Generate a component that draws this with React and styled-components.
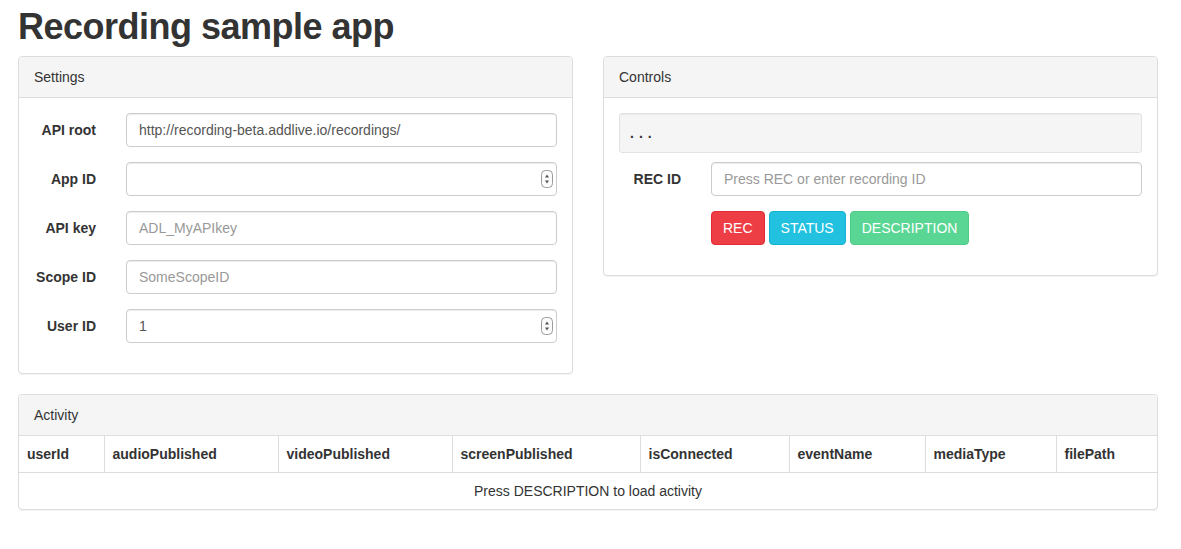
import React from 'react';
import styled, { createGlobalStyle } from 'styled-components';

const GlobalStyle = createGlobalStyle`
  html, body {
    margin: 0;
    padding: 0;
    background: #fff;
  }
  body {
    font-family: "Liberation Sans", Arial, Helvetica, sans-serif;
    font-size: 14px;
    line-height: 20px;
    color: #333;
  }
  * { box-sizing: border-box; }
`;

const Page = styled.div`
  width: 1140px;
  margin-left: 18px;
`;

const Title = styled.h1`
  margin: 7px 0 9px;
  font-size: 36px;
  font-weight: bold;
  letter-spacing: -0.5px;
  line-height: 39.6px;
  color: #333;
`;

const Row = styled.div`
  display: grid;
  grid-template-columns: 555px 555px;
  column-gap: 30px;
  align-items: start;
`;

const Panel = styled.div`
  background: #fff;
  border: 1px solid #ddd;
  border-radius: 4px;
  box-shadow: 0 1px 1px rgba(0, 0, 0, 0.05);
  margin-bottom: 20px;
  overflow: hidden;
`;

const PanelHeading = styled.div`
  padding: 10px 15px;
  background: #f5f5f5;
  border-bottom: 1px solid #ddd;
  color: #333;
`;

const PanelBody = styled.div`
  padding: 15px;
`;

const FormGroup = styled.div`
  display: grid;
  grid-template-columns: 62px 1fr;
  column-gap: 30px;
  margin-bottom: 15px;
`;

const Label = styled.label`
  padding-top: 7px;
  text-align: right;
  font-weight: bold;
  white-space: nowrap;
`;

const InputWrap = styled.div`
  position: relative;
  grid-column: ${(p) => (p.offset ? '2' : 'auto')};
`;

const Input = styled.input`
  display: block;
  width: 100%;
  height: 34px;
  padding: 6px 12px;
  font-family: inherit;
  font-size: 14px;
  line-height: 20px;
  color: #555;
  background: #fff;
  border: 1px solid #ccc;
  border-radius: 4px;
  box-shadow: inset 0 1px 1px rgba(0, 0, 0, 0.075);
  outline: none;
  &::placeholder {
    color: #999;
    opacity: 1;
  }
  &::-webkit-inner-spin-button,
  &::-webkit-outer-spin-button {
    -webkit-appearance: none;
    margin: 0;
  }
`;

const Spinner = styled.svg`
  position: absolute;
  right: 4px;
  top: 8px;
  pointer-events: none;
`;

const Well = styled.div`
  min-height: 20px;
  padding: 9px 10px;
  margin-bottom: 9px;
  background: #f5f5f5;
  border: 1px solid #e3e3e3;
  border-radius: 3px;
  box-shadow: inset 0 1px 1px rgba(0, 0, 0, 0.05);
  font-weight: bold;
  letter-spacing: 5px;
`;

const Buttons = styled.div`
  display: flex;
  gap: 4px;
`;

const Button = styled.button`
  height: 34px;
  padding: 6px 11px;
  font-family: inherit;
  font-size: 14px;
  line-height: 20px;
  color: #fff;
  background: ${(p) => p.bg};
  border: 1px solid ${(p) => p.border};
  border-radius: 4px;
  cursor: pointer;
`;

const Table = styled.table`
  width: 100%;
  border-collapse: collapse;
  table-layout: fixed;
`;

const Th = styled.th`
  padding: 8px;
  text-align: left;
  font-weight: bold;
  line-height: 20px;
  border-left: 1px solid #ddd;
  border-bottom: 1px solid #ddd;
  &:first-child { border-left: none; }
`;

const Td = styled.td`
  padding: 8px;
  text-align: center;
  line-height: 20px;
`;

const NumberSpinner = () => (
  <Spinner width="12" height="18" viewBox="0 0 12 18">
    <rect x="0.5" y="0.5" width="11" height="17" rx="4" fill="#fbfbfb" stroke="#9a9a9a" />
    <path d="M6 4.5 L8 7.5 L4 7.5 Z" fill="#555" />
    <path d="M6 13.5 L8 10.5 L4 10.5 Z" fill="#555" />
  </Spinner>
);

const Field = ({ label, value, placeholder, number }) => (
  <FormGroup>
    <Label>{label}</Label>
    <InputWrap>
      <Input
        type={number ? 'number' : 'text'}
        defaultValue={value}
        placeholder={placeholder}
      />
      {number && <NumberSpinner />}
    </InputWrap>
  </FormGroup>
);

const columns = [
  ['userId', 85],
  ['audioPublished', 174],
  ['videoPublished', 174],
  ['screenPublished', 188],
  ['isConnected', 149],
  ['eventName', 136],
  ['mediaType', 131],
  ['filePath', 101],
];

export default function App() {
  return (
    <Page>
      <GlobalStyle />
      <Title>Recording sample app</Title>
      <Row>
        <Panel>
          <PanelHeading>Settings</PanelHeading>
          <PanelBody>
            <Field label="API root" value="http://recording-beta.addlive.io/recordings/" />
            <Field label="App ID" number />
            <Field label="API key" placeholder="ADL_MyAPIkey" />
            <Field label="Scope ID" placeholder="SomeScopeID" />
            <Field label="User ID" value="1" number />
          </PanelBody>
        </Panel>
        <Panel>
          <PanelHeading>Controls</PanelHeading>
          <PanelBody>
            <Well>...</Well>
            <Field label="REC ID" placeholder="Press REC or enter recording ID" />
            <FormGroup>
              <InputWrap offset>
                <Buttons>
                  <Button bg="#ee3e45" border="#e22d34">REC</Button>
                  <Button bg="#22c1e0" border="#17b3d2">STATUS</Button>
                  <Button bg="#5ad694" border="#4ccb87">DESCRIPTION</Button>
                </Buttons>
              </InputWrap>
            </FormGroup>
          </PanelBody>
        </Panel>
      </Row>
      <Panel>
        <PanelHeading>Activity</PanelHeading>
        <Table>
          <colgroup>
            {columns.map(([name, w]) => (
              <col key={name} style={{ width: w }} />
            ))}
          </colgroup>
          <thead>
            <tr>
              {columns.map(([name]) => (
                <Th key={name}>{name}</Th>
              ))}
            </tr>
          </thead>
          <tbody>
            <tr>
              <Td colSpan={columns.length}>Press DESCRIPTION to load activity</Td>
            </tr>
          </tbody>
        </Table>
      </Panel>
    </Page>
  );
}
